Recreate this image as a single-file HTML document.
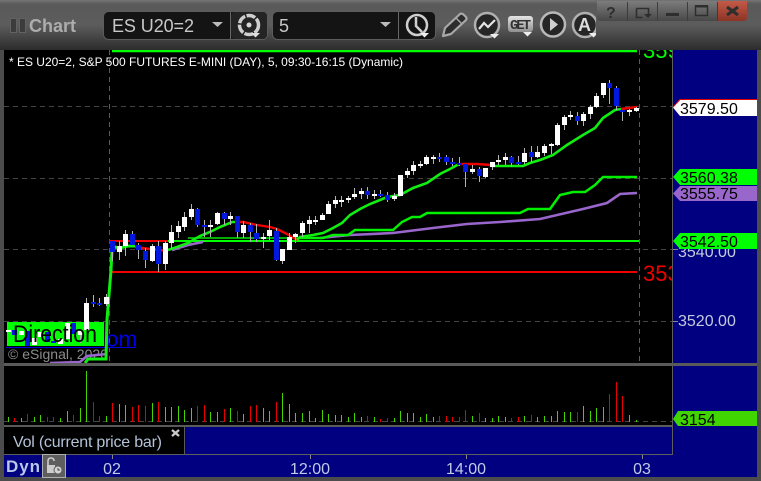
<!DOCTYPE html>
<html><head><meta charset="utf-8"><style>html,body{margin:0;padding:0;background:#444;width:761px;height:481px;overflow:hidden}svg{display:block}text{font-family:"Liberation Sans",sans-serif}</style></head><body>
<svg width="761" height="481" viewBox="0 0 761 481" xmlns="http://www.w3.org/2000/svg">
<defs>
<linearGradient id="t" x1="0" y1="0" x2="0" y2="1"><stop offset="0" stop-color="#757575"/><stop offset=".08" stop-color="#5a5a5a"/><stop offset=".5" stop-color="#5c5c5c"/><stop offset="1" stop-color="#2c2c2c"/></linearGradient>
<linearGradient id="b" x1="0" y1="0" x2="0" y2="1"><stop offset="0" stop-color="#7c7c7c"/><stop offset="1" stop-color="#484848"/></linearGradient>
<linearGradient id="r" x1="0" y1="0" x2="0" y2="1"><stop offset="0" stop-color="#c45a48"/><stop offset="1" stop-color="#8c3426"/></linearGradient>
<linearGradient id="g" x1="0" y1="0" x2="0" y2="1"><stop offset="0" stop-color="#e4e4e4"/><stop offset="1" stop-color="#909090"/></linearGradient>
<clipPath id="c1"><rect x="4" y="50" width="668" height="313"/></clipPath>
<clipPath id="c2"><rect x="430" y="0" width="166" height="50"/></clipPath>
</defs>
<rect width="761" height="481" fill="#4c4c4c"/>
<rect width="761" height="50" fill="url(#t)"/>
<!-- title -->
<rect x="10.5" y="18.5" width="6" height="14" fill="#3c3c3c" stroke="#626262"/><rect x="19.5" y="18.5" width="6" height="14" fill="#3c3c3c" stroke="#626262"/>
<text x="29" y="32" font-size="18" font-weight="bold" fill="#adadad" textLength="47">Chart</text>
<!-- boxes -->
<rect x="103.5" y="11.5" width="164" height="28" rx="5" fill="#141414" stroke="#5c5c5c"/>
<rect x="230" y="12" width="1" height="27" fill="#666"/>
<rect x="231" y="12" width="36" height="27" rx="4" fill="#242424"/>
<rect x="272.5" y="11.5" width="163" height="28" rx="5" fill="#141414" stroke="#5c5c5c"/>
<rect x="398" y="12" width="1" height="27" fill="#666"/>
<text x="112" y="32" font-size="18" fill="#c8c8c8" textLength="82">ES U20=2</text>
<text x="279" y="32" font-size="18" fill="#c8c8c8">5</text>
<path d="M212 22h11l-5.500 5zM380 22h11l-5.500 5z" fill="#bbb"/>
<!-- gear -->
<circle cx="249" cy="25" r="9.500" fill="none" stroke="#cfcfcf" stroke-width="3.500" stroke-dasharray="9 1.500"/>
<circle cx="249" cy="25" r="2.500" fill="#d8d8d8"/>
<path d="M251 33h9l-4.500 4.500z" fill="#ddd"/>
<!-- clock -->
<circle cx="417" cy="25" r="10" fill="none" stroke="#cfcfcf" stroke-width="2.500"/>
<path d="M416 17V26L422 32" fill="none" stroke="#cfcfcf" stroke-width="2.500"/>
<path d="M420 33h9l-4.500 4.500z" fill="#eee"/>
<!-- pencil -->
<path d="M443 36 L445 28 L460 14 Q462 13 464 15 L466 17 Q467 19 466 20 L451 34 Z" fill="#2c2c2c" stroke="#a8a8a8" stroke-width="2.200" stroke-linejoin="round"/>
<path d="M456 18l6 6" stroke="#a8a8a8" stroke-width="1.500"/>
<!-- chart icon -->
<circle cx="487" cy="25" r="12" fill="#262626" stroke="#b0b0b0" stroke-width="2.500"/>
<path d="M479 29 L484 23 L488 27 L495 20" fill="none" stroke="#e4e4e4" stroke-width="2.200"/>
<path d="M490 34h9l-4.500 4.500z" fill="#eee"/>
<!-- GET -->
<rect x="508" y="16" width="25" height="16" rx="3" fill="url(#g)"/>
<text x="510" y="29" font-size="14" font-weight="bold" fill="#333" textLength="21" style="font-family:'Liberation Mono',monospace">GET</text>
<path d="M523 32h9l-4.500 4.500z" fill="#eee"/>
<!-- play -->
<circle cx="553" cy="24.500" r="12" fill="#262626" stroke="#b8b8b8" stroke-width="2.500"/>
<path d="M550 18l8 6.500-8 6.500z" fill="#d0d0d0"/>
<!-- A -->
<g clip-path="url(#c2)"><circle cx="585" cy="25" r="12" fill="#262626" stroke="#b0b0b0" stroke-width="2.500"/>
<text x="578" y="31" font-size="18" font-weight="bold" fill="#ddd">A</text>
<path d="M589 33h9l-4.500 4.500z" fill="#eee"/></g>
<!-- window buttons -->
<path d="M597 1h150v16q0 4-4 4H601q-4 0-4-4z" fill="url(#b)"/>
<path d="M717 1h30v16q0 4-4 4h-26z" fill="url(#r)"/>
<path d="M627.500 2V21M657.500 2V21M687.500 2V21M717.500 2V21" stroke="#3c3c3c"/>
<text x="606" y="18" font-size="16" font-weight="bold" fill="#2e2e2e">?</text>
<path d="M636.500 8.500h12v8M636.500 8.500v9h6" fill="none" stroke="#2e2e2e" stroke-width="1.600"/>
<path d="M644 14h8l-4 4z" fill="#2e2e2e"/>
<rect x="666" y="13" width="13" height="3" fill="#2e2e2e"/>
<rect x="695.500" y="6.500" width="12" height="9" fill="none" stroke="#2e2e2e" stroke-width="1.500"/>
<rect x="695" y="5" width="13" height="2.500" fill="#2e2e2e"/>
<path d="M727 7l11 8M738 7l-11 8" stroke="#2e2e2e" stroke-width="3"/>
<!-- panels -->
<rect x="4" y="50" width="668" height="313" fill="#000"/>
<rect x="673" y="50" width="84" height="313" fill="#000080"/>
<rect x="672" y="50" width="1" height="405" fill="#5e5e5e"/>
<rect x="4" y="366" width="668" height="59" fill="#000"/>
<rect x="673" y="366" width="84" height="89" fill="#000080"/>
<rect x="4" y="363" width="753" height="3" fill="#5a5a5a"/>
<rect x="4" y="427" width="180" height="27" fill="#000"/>
<rect x="185" y="427" width="487" height="27" fill="#000080"/>
<rect x="4" y="425" width="668" height="2" fill="#5a5a5a"/>
<rect x="184" y="425" width="1" height="29" fill="#5a5a5a"/>
<rect x="4" y="454" width="669" height="1" fill="#5e5e5e"/>
<rect x="4" y="455" width="753" height="22" fill="#000080"/>
<!-- grid -->
<g stroke="#444" fill="none" stroke-dasharray="5 4" shape-rendering="crispEdges">
<path d="M4 106.500H672M4 178.500H672M4 249.500H672M4 321.500H672M4 421.500H672"/>
<path d="M109.500 50V363M639.500 50V363" stroke="#5a5a5a"/>
</g>
<path d="M673 249.500h5M673 321.500h5" stroke="#888"/>
<g clip-path="url(#c1)">
<!-- direction box & link -->
<rect x="6" y="347" width="130" height="1" fill="#0000e0"/>
<text x="106" y="346.500" font-size="22.500" fill="#0000e8">om</text>
<rect x="7" y="322" width="97" height="24" fill="#00ff00"/>
<text x="8" y="359" font-size="14" fill="#8c8c8c" textLength="100">© eSignal, 2020</text>
<!-- levels -->
<path d="M112 51H637" stroke="#00ff00" stroke-width="2.400"/>
<path d="M112 272H637" stroke="#f00000" stroke-width="2"/>
<path d="M109 241H168" stroke="#f00000" stroke-width="2"/>
<path d="M168 241H639" stroke="#00ff00" stroke-width="2"/>
<path d="M188 238H300" stroke="#00e800" stroke-width="1.500"/>
<text x="643" y="58" font-size="22" fill="#00ff00">3595</text>
<text x="643" y="281" font-size="22" fill="#f00000">3533</text>
<!-- purple -->
<path d="M50 363L80 362L87 356L107 354M172 250L188 245L203 242M320 238L350 235L393 233L433 228L467 224L500 222L540 219L583 209L607 203L620 194L637 193" fill="none" stroke="#9966cc" stroke-width="2.600"/>
<!-- second band -->
<path d="M300 238H323L333 235H348L355 230H393L402 222L412 217H420L427 213H520L528 209H550L560 195L573 192H585L595 185L603 177H637" fill="none" stroke="#00f000" stroke-width="2.500"/>
<!-- main ema -->
<path d="M85 363L88 359H106L107 320L111 270L112 250L115 247L120 248L128 246H135" fill="none" stroke="#10f010" stroke-width="3"/>
<path d="M135 247L150 249L168 251" fill="none" stroke="#f00000" stroke-width="2.400"/>
<path d="M168 250L177 247L188 243L200 236L210 232L220 227L232 222H237" fill="none" stroke="#10f010" stroke-width="2.600"/>
<path d="M237 222L243 222L257 225L270 227L277 229L287 234L297 240" fill="none" stroke="#f00000" stroke-width="2.400"/>
<path d="M297 240L300 237L313 235L323 233L333 228L342 223L350 215L360 209L370 204L380 200L387 197L400 195L413 188L427 183L440 174L450 169L459 164" fill="none" stroke="#10f010" stroke-width="2.600"/>
<path d="M459 164H477L492 165" fill="none" stroke="#f00000" stroke-width="2.400"/>
<path d="M492 166H523L530 163L540 160L553 155L567 145L583 135L595 128L603 118L615 110L621 109" fill="none" stroke="#10f010" stroke-width="2.600"/>
<path d="M621 109L637 107" fill="none" stroke="#f00000" stroke-width="2.400"/>
<g shape-rendering="crispEdges">
<!-- wicks -->
<path stroke="#b4b4b4" fill="none" d="M80.500 331V343M86.500 298V330M106.500 294V306M119.500 241V260M125.500 230V256M152.500 244V262M165.500 241V270M171.500 225V249M178.500 221V238M184.500 212V231M191.500 204V220M210.500 220V237M217.500 212V225M230.500 212V225M243.500 221V238M263.500 233V248M269.500 220V240M282.500 249V264M289.500 233V250M295.500 233V243M302.500 221V237M309.500 216V233M315.500 216V225M322.500 213V220M328.500 201V214M335.500 196V208M341.500 196V207M348.500 196V203M354.500 188V199M361.500 188V199M374.500 190V199M394.500 193V201M407.500 168V178M413.500 161V175M420.500 161V168M426.500 155V165M433.500 155V164M472.500 165V174M485.500 168V178M492.500 162V170M498.500 155V165M505.500 153V165M524.500 148V164M537.500 146V158M544.500 144V156M551.500 143V154M557.500 123V146M564.500 115V130M570.500 111V120M583.500 112V126M590.500 105V119M596.500 93V108M603.500 83V98M629.500 109V116M636.500 107V112M93.500 295V307M99.500 298V306M112.500 241V261M132.500 231V245M138.500 243V259M145.500 248V268M158.500 241V272M197.500 208V227M204.500 220V237M224.500 212V225M237.500 216V238M250.500 223V242M256.500 224V242M276.500 228V261M367.500 187V199M380.500 190V197M387.500 192V202M439.500 153V162M446.500 155V165M452.500 158V166M459.500 157V166M465.500 164V187M479.500 167V182M511.500 156V167M518.500 156V165M531.500 146V162M577.500 112V125M609.500 80V104M616.500 86V110M622.500 110V121"/>
<!-- white bodies -->
<path fill="#fff" d="M6 330h5v2h-5zM19 331h5v4h-5zM32 338h5v7h-5zM38 332h5v5h-5zM58 339h5v5h-5zM65 323h5v16h-5zM78 331h5v4h-5zM84 303h5v27h-5zM104 297h5v7h-5zM117 246h5v6h-5zM123 234h5v12h-5zM150 246h5v15h-5zM163 243h5v21h-5zM169 232h5v11h-5zM176 226h5v6h-5zM182 217h5v10h-5zM189 209h5v8h-5zM208 225h5v2h-5zM215 213h5v11h-5zM228 216h5v3h-5zM241 225h5v8h-5zM261 237h5v2h-5zM267 230h5v6h-5zM280 249h5v12h-5zM287 237h5v13h-5zM293 234h5v3h-5zM300 223h5v10h-5zM307 220h5v4h-5zM313 220h5v2h-5zM320 215h5v5h-5zM326 204h5v10h-5zM333 200h5v4h-5zM339 200h5v2h-5zM346 198h5v2h-5zM352 194h5v3h-5zM359 191h5v3h-5zM372 194h5v2h-5zM392 196h5v3h-5zM398 175h5v21h-5zM405 171h5v4h-5zM411 165h5v6h-5zM418 164h5v2h-5zM424 157h5v7h-5zM431 157h5v2h-5zM470 169h5v3h-5zM483 168h5v9h-5zM490 162h5v5h-5zM496 160h5v2h-5zM503 157h5v3h-5zM522 153h5v9h-5zM535 152h5v5h-5zM542 146h5v7h-5zM549 144h5v2h-5zM555 125h5v20h-5zM562 117h5v8h-5zM568 115h5v2h-5zM581 114h5v7h-5zM588 107h5v7h-5zM594 96h5v11h-5zM601 83h5v12h-5zM627 110h5v2h-5zM634 108h5v3h-5z"/>
<!-- blue bodies -->
<path fill="#0018e0" d="M12 330h5v5h-5zM25 331h5v15h-5zM45 332h5v10h-5zM51 341h5v2h-5zM71 323h5v11h-5zM91 302h5v2h-5zM97 303h5v2h-5zM110 241h5v11h-5zM130 234h5v11h-5zM136 245h5v5h-5zM143 251h5v9h-5zM156 246h5v18h-5zM195 209h5v16h-5zM202 225h5v2h-5zM222 213h5v6h-5zM235 216h5v16h-5zM248 225h5v7h-5zM254 233h5v6h-5zM274 231h5v29h-5zM365 191h5v4h-5zM378 194h5v2h-5zM385 195h5v5h-5zM437 157h5v2h-5zM444 157h5v5h-5zM450 162h5v2h-5zM457 163h5v2h-5zM463 164h5v8h-5zM477 169h5v7h-5zM509 157h5v6h-5zM516 162h5v2h-5zM529 152h5v5h-5zM575 116h5v5h-5zM607 83h5v5h-5zM614 88h5v18h-5zM620 110h5v2h-5z"/>
</g>
<text x="13" y="342" font-size="24.500" fill="#000" textLength="84" lengthAdjust="spacingAndGlyphs">Direction</text>
<text x="9" y="66" font-size="12" fill="#fff" textLength="394">* ES U20=2, S&amp;P 500 FUTURES E-MINI (DAY), 5, 09:30-16:15 (Dynamic)</text>
</g>
<!-- volume -->
<g fill="none" shape-rendering="crispEdges">
<path stroke="#44d400" d="M8.500 422v-5M21.500 422v-4M34.500 422v-5M40.500 422v-7M60.500 422v-4M67.500 422v-11M80.500 422v-14M86.500 422v-51M106.500 422v-6M119.500 422v-18M125.500 422v-17M152.500 422v-19M165.500 422v-15M171.500 422v-15M178.500 422v-16M184.500 422v-12M191.500 422v-14M210.500 422v-10M217.500 422v-10M230.500 422v-14M243.500 422v-8M263.500 422v-14M269.500 422v-11M282.500 422v-29M289.500 422v-18M295.500 422v-9M302.500 422v-9M309.500 422v-11M315.500 422v-4M322.500 422v-12M328.500 422v-8M335.500 422v-7M341.500 422v-7M348.500 422v-5M354.500 422v-9M361.500 422v-5M374.500 422v-5M394.500 422v-4M400.500 422v-11M407.500 422v-9M413.500 422v-9M420.500 422v-5M426.500 422v-8M433.500 422v-5M472.500 422v-6M485.500 422v-4M492.500 422v-4M498.500 422v-6M505.500 422v-5M524.500 422v-6M537.500 422v-5M544.500 422v-6M551.500 422v-6M557.500 422v-11M564.500 422v-10M570.500 422v-10M583.500 422v-16M590.500 422v-11M596.500 422v-14M603.500 422v-15M629.500 422v-7M636.500 422v-2"/>
<path stroke="#e80000" d="M14.500 422v-4M27.500 422v-8M47.500 422v-5M53.500 422v-5M73.500 422v-7M93.500 422v-20M99.500 422v-6M112.500 422v-19M132.500 422v-15M138.500 422v-17M145.500 422v-16M158.500 422v-20M197.500 422v-16M204.500 422v-17M224.500 422v-13M237.500 422v-11M250.500 422v-16M256.500 422v-17M276.500 422v-20M367.500 422v-6M380.500 422v-3M387.500 422v-4M439.500 422v-6M446.500 422v-6M452.500 422v-5M459.500 422v-5M465.500 422v-12M479.500 422v-9M511.500 422v-4M518.500 422v-5M531.500 422v-7M577.500 422v-10M609.500 422v-28M616.500 422v-40M622.500 422v-26"/>
</g>
<!-- price labels -->
<text x="678" y="326" font-size="16" fill="#c4cbdc">3520.00</text>
<text x="678" y="257" font-size="16" fill="#c4cbdc">3540.00</text>
<path d="M673 107.500L680 99H757V116H680Z" fill="#fff"/>
<path d="M673 107L680 99.500H757" fill="none" stroke="#e00000"/>
<text x="680" y="114" font-size="16" fill="#000">3579.50</text>
<path d="M673 177L680 169H757V185H680Z" fill="#00ff00"/>
<text x="680" y="183" font-size="16" fill="#000">3560.38</text>
<path d="M673 193.500L680 186H757V201H680Z" fill="#9966cc"/>
<text x="680" y="199" font-size="16" fill="#000">3555.75</text>
<path d="M673 241L680 233H757V249H680Z" fill="#00ff00"/>
<text x="680" y="247" font-size="16" fill="#000">3542.50</text>
<path d="M673 419L678 411H757V426H678Z" fill="#40d400"/>
<text x="680" y="425" font-size="16" fill="#000">3154</text>
<!-- legend -->
<text x="13" y="447" font-size="16" fill="#b4c2d8" textLength="149">Vol (current price bar)</text>
<path d="M172 430l7 6M179 430l-7 6" stroke="#c8c8c8" stroke-width="2.400"/>
<!-- bottom -->
<text x="6" y="472" font-size="17" font-weight="bold" fill="#b8c8e8" textLength="34">Dyn</text>
<rect x="42.500" y="454.500" width="23" height="23" fill="#5e5e5e" stroke="#b0b0b0"/>
<path d="M48 465v-4q0-3 3-3t3 3" fill="none" stroke="#ccc" stroke-width="1.600"/>
<rect x="47" y="465" width="8" height="8" fill="#ccc"/>
<circle cx="58" cy="470" r="4" fill="#d4d4d4" stroke="#5e5e5e"/>
<path d="M58 468v2h2" fill="none" stroke="#444"/>
<path d="M112.500 455v4M310.500 455v4M466.500 455v4M642.500 455v4" stroke="#888"/>
<g font-size="16" fill="#c0cce4" text-anchor="middle">
<text x="112" y="474">02</text><text x="310" y="474">12:00</text><text x="466" y="474">14:00</text><text x="642" y="474">03</text>
</g>
</svg>
</body></html>
